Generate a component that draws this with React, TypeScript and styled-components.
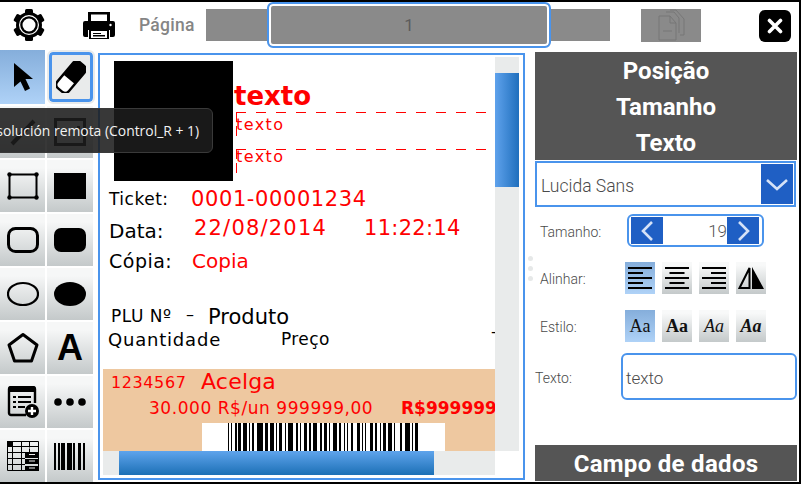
import React, { FC } from 'react';
import styled, { createGlobalStyle } from 'styled-components';

const GlobalStyle = createGlobalStyle`
	html, body {
		margin: 0;
		padding: 0;
		width: 801px;
		height: 484px;
		overflow: hidden;
		background: #fff;
	}
	* {
		box-sizing: border-box;
	}
`;

const Screen = styled.div`
	position: relative;
	width: 801px;
	height: 484px;
	overflow: hidden;
	background: #fff;
	border-top: 2px solid #000;
	border-bottom: 2px solid #000;
	border-right: 2px solid #000;
	font-family: Roboto, sans-serif;
	display: flex;
	flex-direction: column;
`;

/* top bar */
const Toolbar = styled.div`
	height: 46px;
	margin-bottom: 2px;
	flex: none;
	display: flex;
	align-items: center;
`;
const ToolIcon = styled.div<{ $left: number; $width: number }>`
	margin-left: ${(p) => p.$left}px;
	width: ${(p) => p.$width}px;
	height: 34px;
	display: flex;
	align-items: center;
	justify-content: center;
	flex: none;
`;
const PageLabel = styled.div`
	margin-left: 24px;
	width: 67px;
	font-size: 17.5px;
	font-weight: 500;
	color: #858585;
	letter-spacing: 0.25px;
`;
const PageBar = styled.div`
	width: 404px;
	height: 32px;
	background: #8a8a8a;
	display: flex;
	align-items: center;
	flex: none;
`;
const PageInput = styled.div`
	margin-left: 61px;
	width: 284px;
	height: 46px;
	flex: none;
	background: #8a8a8a;
	border: 2px solid #4a94ec;
	box-shadow: inset 0 0 0 2px #fff;
	border-radius: 6px;
	display: flex;
	align-items: center;
	justify-content: center;
	font-size: 17px;
	color: #5c5c5c;
`;
const PasteButton = styled.div`
	margin: 1px 0 0 31px;
	width: 60px;
	height: 33px;
	background: #8a8a8a;
	display: flex;
	align-items: center;
	justify-content: center;
	flex: none;
`;
const CloseButton = styled.div`
	margin: 2px 0 0 58px;
	width: 32px;
	height: 32px;
	background: #000;
	border-radius: 6px;
	display: flex;
	align-items: center;
	justify-content: center;
	flex: none;
`;

/* main area */
const Main = styled.div`
	flex: 1;
	display: flex;
	min-height: 0;
`;
const Palette = styled.div`
	width: 93px;
	flex: none;
	display: grid;
	grid-template-columns: 45px 46px;
	grid-template-rows: 54px;
	grid-auto-rows: 52px;
	column-gap: 2px;
	row-gap: 2px;
`;
const PaletteButton = styled.div<{ $active?: boolean; $focused?: boolean }>`
	display: flex;
	align-items: center;
	justify-content: center;
	background: ${(p) =>
		p.$active
			? 'linear-gradient(#85aedb, #afd2f7)'
			: p.$focused
				? '#e9ebeb'
				: 'linear-gradient(#f6f7f7 15%, #c4c9ca)'};
	${(p) =>
		p.$focused &&
		'margin: 2px 0 2px 2px; border: 3px solid #4a94ec; border-radius: 4px; outline: 2px solid #e9ebeb;'}
`;
const GlyphA = styled.span`
	font-family: 'Liberation Sans', sans-serif;
	font-weight: 700;
	font-size: 36px;
	line-height: 1;
	color: #000;
`;

/* document */
const DocPanel = styled.div`
	margin: 3px 0 0 5px;
	width: 427px;
	height: 427px;
	flex: none;
	border: 2px solid #4a94ec;
	padding: 2px 0 0 3px;
	display: grid;
	grid-template-columns: 392px 24px;
	grid-template-rows: 394px 24px;
`;
const Canvas = styled.div`
	position: relative;
	overflow: hidden;
	background: #fff;
	font-family: 'DejaVu Sans', sans-serif;
	color: #000;
`;
const VTrack = styled.div`
	background: #e9ebeb;
	padding-top: 16px;
`;
const VThumb = styled.div`
	height: 114px;
	background: linear-gradient(90deg, #5fa2ec, #1f6fbd);
`;
const HTrack = styled.div`
	background: #e9ebeb;
	padding-left: 16px;
`;
const HThumb = styled.div`
	width: 315px;
	height: 100%;
	background: linear-gradient(#5fa4ec, #1c70b6);
`;
const Logo = styled.div`
	position: absolute;
	left: 11px;
	top: 4px;
	width: 119px;
	height: 120px;
	background: #000;
`;
const Item = styled.div<{
	$x: number;
	$y: number;
	$size: number;
	$red?: boolean;
	$bold?: boolean;
	$track?: number;
}>`
	position: absolute;
	left: ${(p) => p.$x}px;
	top: ${(p) => p.$y}px;
	font-size: ${(p) => p.$size}px;
	line-height: 1;
	white-space: pre;
	color: ${(p) => (p.$red ? '#ff0000' : '#000')};
	font-weight: ${(p) => (p.$bold ? 700 : 400)};
	letter-spacing: ${(p) => p.$track ?? 0}px;
`;
const DashBox = styled.div<{ $y: number; $width: number }>`
	position: absolute;
	left: 133px;
	top: ${(p) => p.$y}px;
	width: ${(p) => p.$width}px;
	height: 24px;
	background:
		repeating-linear-gradient(90deg, #ff0000 0 10px, transparent 10px 20px) top left / 100% 1px no-repeat,
		repeating-linear-gradient(0deg, #ff0000 0 10px, transparent 10px 14px) top left / 1px 100% no-repeat;
`;
const ItemBand = styled.div`
	position: absolute;
	left: 0;
	top: 312px;
	width: 392px;
	height: 82px;
	background: #eec8a0;
`;
const BarcodeBox = styled.div`
	position: absolute;
	left: 99px;
	top: 366px;
	width: 243px;
	height: 28px;
	background: #fff;
	display: flex;
	justify-content: center;
`;

/* side panel */
const Side = styled.div`
	margin-left: 10px;
	width: 262px;
	flex: none;
	padding-top: 2px;
	display: flex;
	flex-direction: column;
`;
const SectionHead = styled.div`
	background: #555555;
	color: #fff;
	font-weight: 700;
	font-size: 24px;
	text-align: center;
`;
const HeadLine = styled.div`
	height: 36px;
	line-height: 38px;
`;
const Combo = styled.div`
	margin: 1px 1px 0 0;
	height: 46px;
	border: 2px solid #4a94ec;
	display: flex;
	align-items: center;
	justify-content: space-between;
	padding: 0 1px 0 4px;
	font-size: 17.5px;
	font-weight: 300;
	color: #4a4a4a;
`;
const ComboText = styled.span`
	padding-top: 3px;
`;
const ComboArrow = styled.div`
	width: 32px;
	height: 40px;
	background: #1f5fc4;
	display: flex;
	align-items: center;
	justify-content: center;
`;
const Row = styled.div<{ $top: number; $indent?: number }>`
	margin-top: ${(p) => p.$top}px;
	padding-left: ${(p) => p.$indent ?? 5}px;
	display: flex;
	align-items: center;
`;
const FieldLabel = styled.div<{ $width: number }>`
	width: ${(p) => p.$width}px;
	flex: none;
	padding-top: 2px;
	font-size: 14px;
	font-weight: 300;
	color: #4a4a4a;
`;
const Spinner = styled.div`
	width: 137px;
	height: 33px;
	border: 2px solid #4a94ec;
	border-radius: 6px;
	padding: 0 3px 0 2px;
	display: flex;
	align-items: center;
	font-size: 17px;
	font-weight: 300;
	color: #555;
`;
const SpinButton = styled.div`
	width: 32px;
	height: 27px;
	flex: none;
	background: #1f5fc4;
	display: flex;
	align-items: center;
	justify-content: center;
`;
const SpinValue = styled.div`
	flex: 1;
	text-align: right;
`;
const ToggleGroup = styled.div`
	display: flex;
	gap: 7px;
`;
const Toggle = styled.div<{ $on?: boolean }>`
	width: 30px;
	height: 32px;
	display: flex;
	align-items: center;
	justify-content: center;
	background: ${(p) =>
		p.$on
			? 'linear-gradient(#85aedb, #afd2f7)'
			: 'linear-gradient(#f8f9f9 10%, #c4c9ca)'};
`;
const StyleGlyph = styled.span<{ $bold?: boolean; $italic?: boolean }>`
	font-family: 'Liberation Serif', serif;
	font-size: 18px;
	color: #111;
	font-weight: ${(p) => (p.$bold ? 700 : 400)};
	font-style: ${(p) => (p.$italic ? 'italic' : 'normal')};
`;
const TextField = styled.div`
	width: 176px;
	height: 47px;
	border: 2px solid #4a94ec;
	border-radius: 6px;
	padding: 2px 0 0 3px;
	display: flex;
	align-items: center;
	font-size: 17px;
	font-weight: 300;
	color: #4a4a4a;
`;
const DataHead = styled.div`
	margin-top: auto;
	margin-bottom: 1px;
	height: 36px;
	line-height: 38px;
	background: #555555;
	color: #fff;
	font-weight: 700;
	font-size: 24px;
	letter-spacing: 0.3px;
	text-align: center;
`;
const Grip = styled.div`
	position: absolute;
	left: 528px;
	top: 254px;
	display: flex;
	flex-direction: column;
	gap: 5px;
`;
const GripDot = styled.div`
	width: 5px;
	height: 5px;
	border-radius: 50%;
	background: #e6e8e8;
`;
const Tooltip = styled.div`
	position: absolute;
	left: -60px;
	top: 106px;
	width: 273px;
	height: 45px;
	padding-right: 13px;
	border: 1px solid #3a3a3a;
	border-radius: 6px;
	background: rgba(28, 28, 28, 0.88);
	color: #f2f2f2;
	font-family: 'Open Sans', sans-serif;
	font-size: 13.9px;
	display: flex;
	align-items: center;
	justify-content: flex-end;
	white-space: pre;
`;

/* drawings */
const GearIcon = () => (
	<svg width="32" height="34" viewBox="0 0 32 34">
		<g fill="#000">
			{[0, 60, 120, 180, 240, 300].map((a) => (
				<rect key={a} x="12" y="1" width="8" height="8" rx="1.5" transform={`rotate(${a} 16 17)`} />
			))}
			<circle cx="16" cy="17" r="13" />
		</g>
		<circle cx="16" cy="17" r="9.4" fill="none" stroke="#fff" strokeWidth="1.2" />
		<circle cx="16" cy="17" r="6.5" fill="#fff" />
	</svg>
);
const PrinterIcon = () => (
	<svg width="32" height="27" viewBox="0 0 32 27">
		<path d="M5 0h22v10h-3V2.500H8V10H5z" fill="#000" />
		<path d="M2 9h28a2 2 0 0 1 2 2v12a2 2 0 0 1-2 2h-3v-7H5v7H2a2 2 0 0 1-2-2V11a2 2 0 0 1 2-2z" fill="#000" />
		<path d="M6 18h20v9H6z" fill="#000" />
		<path d="M8 19h16v7H8z" fill="#fff" />
		<path d="M10 21h8v1h-8zM10 23h12v1.500H10z" fill="#000" />
		<circle cx="27.500" cy="13" r="1.200" fill="#fff" />
	</svg>
);
const PasteIcon = () => (
	<svg width="30" height="33" viewBox="0 0 30 33" fill="none" stroke="#777" strokeWidth="1">
		<path d="M10 3h8l5 6v15" />
		<path d="M14 1h6l8 9v16h-4" />
		<path d="M3 7h11l6 7v17H3z" />
		<path d="M14 7v7h6M7 22h9" />
	</svg>
);
const CloseIcon = () => (
	<svg width="16" height="16" viewBox="0 0 16 16">
		<path d="M2.500 2.500l11 11M13.500 2.500l-11 11" stroke="#fff" strokeWidth="3.600" strokeLinecap="round" />
	</svg>
);
const ArrowIcon = () => (
	<svg width="22" height="32" viewBox="0 0 22 32">
		<path d="M3 2v24l6.500-5.500L14 30l5-2.500-4.500-9.500H22z" fill="#000" transform="translate(-1 0)" />
	</svg>
);
const EraserIcon = () => (
	<svg width="30" height="32" viewBox="0 0 30 32">
		<g transform="rotate(-50 15 16)">
			<rect x="-2" y="8.500" width="34" height="15" rx="5" fill="#fff" stroke="#000" strokeWidth="2.400" />
			<path d="M12 8.500h15a5 5 0 0 1 5 5v5a5 5 0 0 1-5 5H12z" fill="#000" />
		</g>
	</svg>
);
const PencilIcon = () => (
	<svg width="30" height="30" viewBox="0 0 30 30">
		<path d="M4 27L26 4" stroke="#000" strokeWidth="4" />
	</svg>
);
const ImageIcon = () => (
	<svg width="32" height="32" viewBox="0 0 32 32">
		<rect x="1.500" y="3.500" width="29" height="25" fill="none" stroke="#000" strokeWidth="3" />
		<path d="M23 10h3v3h-3z" fill="#000" />
	</svg>
);
const RectIcon = ({ filled }: { filled?: boolean }) =>
	filled ? (
		<svg width="32" height="28" viewBox="0 0 32 28">
			<rect x="0" y="1" width="32" height="26" fill="#000" />
		</svg>
	) : (
		<svg width="32" height="28" viewBox="0 0 32 28">
			<rect x="2.500" y="2.500" width="27" height="23" fill="none" stroke="#000" strokeWidth="2" />
			{[[2.5, 2.5], [29.5, 2.5], [2.5, 25.5], [29.5, 25.5]].map(([x, y]) => (
				<circle key={`${x}${y}`} cx={x} cy={y} r="2.200" fill="#000" />
			))}
		</svg>
	);
const RoundRectIcon = ({ filled }: { filled?: boolean }) => (
	<svg width="32" height="26" viewBox="0 0 32 26">
		<rect
			x={filled ? 0 : 1.5}
			y={filled ? 1 : 1.5}
			width={filled ? 32 : 29}
			height={filled ? 24 : 23}
			rx="7"
			fill={filled ? '#000' : 'none'}
			stroke="#000"
			strokeWidth={filled ? 0 : 3}
		/>
	</svg>
);
const EllipseIcon = ({ filled }: { filled?: boolean }) => (
	<svg width="32" height="26" viewBox="0 0 32 26">
		<ellipse
			cx="16"
			cy="13"
			rx={filled ? 16 : 15}
			ry={filled ? 12 : 11}
			fill={filled ? '#000' : 'none'}
			stroke="#000"
			strokeWidth={filled ? 0 : 2.2}
		/>
	</svg>
);
const PolygonIcon = () => (
	<svg width="32" height="32" viewBox="0 0 32 32">
		<path d="M16 2.500L30 13l-5.500 16h-17L2 13z" fill="none" stroke="#000" strokeWidth="3" strokeLinejoin="round" />
	</svg>
);
const FormIcon = () => (
	<svg width="32" height="32" viewBox="0 0 32 32">
		<path d="M19 29H4a2 2 0 0 1-2-2V3a2 2 0 0 1 2-2h22a2 2 0 0 1 2 2v14" fill="none" stroke="#000" strokeWidth="2.400" />
		<path d="M2 1h26v5H2z" fill="#000" />
		<path d="M6 10h3v2H6zM11 10h13v2H11zM6 15h3v2H6zM11 15h13v2H11zM6 20h3v2H6zM11 20h7v2h-7z" fill="#000" />
		<circle cx="25" cy="25" r="7" fill="#000" />
		<path d="M25 21v8M21 25h8" stroke="#fff" strokeWidth="2.400" />
	</svg>
);
const DotsIcon = () => (
	<svg width="32" height="10" viewBox="0 0 32 10">
		<circle cx="4" cy="5" r="3.800" fill="#000" />
		<circle cx="16" cy="5" r="3.800" fill="#000" />
		<circle cx="28" cy="5" r="3.800" fill="#000" />
	</svg>
);
const TableIcon = () => (
	<svg width="32" height="30" viewBox="0 0 32 30">
		<path d="M0.500 0.500h31v29h-31z" fill="none" stroke="#000" />
		<path d="M0 0h5v5H0zM18 11h14v6H18zM18 18h14v5H18zM18 25h14v5H18z" fill="#000" />
		<path d="M0 5.500h32M0 11.500h18M0 17.500h18M0 23.500h18M5.500 0v30M14.500 0v30M22.500 0v11" stroke="#000" fill="none" />
		<path d="M20 7h9M22 13.500h6M22 20h6M22 27h6" stroke="#eee" />
	</svg>
);
const BARS = [2, 2, 2, 1, 4, 2, 5, 1, 2, 3, 3, 2, 2, 2, 3, 3];
const BarcodeIcon = () => {
	let x = 0;
	return (
		<svg width="32" height="27" viewBox="0 0 32 27">
			{BARS.map((w, i) => {
				const at = x;
				x += w;
				return i % 2 === 0 ? <rect key={i} x={at} y="0" width={w} height="27" fill="#000" /> : null;
			})}
		</svg>
	);
};
const TicketBarcode = () => {
	const widths = [
		1, 2, 1, 3, 2, 1, 3, 2, 4, 2, 1, 2, 2, 3, 6, 2, 3, 2, 4, 2, 1, 2, 3, 3, 1, 2, 5, 3, 2, 2, 1, 3, 3, 2, 2, 2, 4, 3,
		2, 2, 3, 2, 1, 3, 4, 2, 2, 3, 1, 2, 1, 3, 2, 4, 3, 2, 1, 2, 1, 4, 3, 2, 2, 3, 1, 2, 3, 2, 4, 2, 1, 5, 2, 3, 5, 2,
		1, 2, 3, 3, 2, 4, 2, 2, 1, 2,
	];
	let x = 0;
	return (
		<svg width="192" height="28" viewBox="0 0 192 28">
			{widths.map((w, i) => {
				const at = x;
				x += w;
				return i % 2 === 0 ? <rect key={i} x={at} y="0" width={w} height="28" fill="#000" /> : null;
			})}
		</svg>
	);
};
const Chevron = ({ dir }: { dir: 'left' | 'right' | 'down' }) => {
	const d = { left: 'M14 3L5 12l9 9', right: 'M5 3l9 9-9 9', down: 'M2 6l10 9 10-9' }[dir];
	return (
		<svg width={dir === 'down' ? 24 : 18} height="24" viewBox={dir === 'down' ? '0 0 24 20' : '0 0 18 24'}>
			<path d={d} fill="none" stroke="#d5e2f7" strokeWidth="2.600" />
		</svg>
	);
};
const AlignIcon = ({ mode }: { mode: 'left' | 'center' | 'right' }) => {
	const rows = [24, 15, 24, 15, 24];
	return (
		<svg width="24" height="24" viewBox="0 0 24 24">
			{rows.map((w, i) => (
				<rect
					key={i}
					x={mode === 'left' ? 0 : mode === 'right' ? 24 - w : (24 - w) / 2}
					y={1 + i * 5}
					width={w}
					height="2"
					fill="#000"
				/>
			))}
		</svg>
	);
};
const FlipIcon = () => (
	<svg width="26" height="24" viewBox="0 0 26 24">
		<path d="M11.500 2v20H1.500z" fill="none" stroke="#000" strokeWidth="2" />
		<path d="M14 1v22h12z" fill="#000" />
	</svg>
);

const App: FC = () => (
	<Screen>
		<GlobalStyle />
		<Toolbar>
			<ToolIcon $left={13} $width={32}>
				<GearIcon />
			</ToolIcon>
			<ToolIcon $left={38} $width={32}>
				<PrinterIcon />
			</ToolIcon>
			<PageLabel>Página</PageLabel>
			<PageBar>
				<PageInput>1</PageInput>
			</PageBar>
			<PasteButton>
				<PasteIcon />
			</PasteButton>
			<CloseButton>
				<CloseIcon />
			</CloseButton>
		</Toolbar>
		<Main>
			<Palette>
				<PaletteButton $active>
					<ArrowIcon />
				</PaletteButton>
				<PaletteButton $focused>
					<EraserIcon />
				</PaletteButton>
				<PaletteButton>
					<PencilIcon />
				</PaletteButton>
				<PaletteButton>
					<ImageIcon />
				</PaletteButton>
				<PaletteButton>
					<RectIcon />
				</PaletteButton>
				<PaletteButton>
					<RectIcon filled />
				</PaletteButton>
				<PaletteButton>
					<RoundRectIcon />
				</PaletteButton>
				<PaletteButton>
					<RoundRectIcon filled />
				</PaletteButton>
				<PaletteButton>
					<EllipseIcon />
				</PaletteButton>
				<PaletteButton>
					<EllipseIcon filled />
				</PaletteButton>
				<PaletteButton>
					<PolygonIcon />
				</PaletteButton>
				<PaletteButton>
					<GlyphA>A</GlyphA>
				</PaletteButton>
				<PaletteButton>
					<FormIcon />
				</PaletteButton>
				<PaletteButton>
					<DotsIcon />
				</PaletteButton>
				<PaletteButton>
					<TableIcon />
				</PaletteButton>
				<PaletteButton>
					<BarcodeIcon />
				</PaletteButton>
			</Palette>
			<DocPanel>
				<Canvas>
					<Logo />
					<Item $x={131} $y={26} $size={26} $red $bold>
						texto
					</Item>
					<DashBox $y={55} $width={254} />
					<DashBox $y={92} $width={262} />
					<Item $x={133} $y={60} $size={16} $red $track={1.4}>
						texto
					</Item>
					<Item $x={133} $y={92} $size={16} $red $track={1.4}>
						texto
					</Item>
					<Item $x={6} $y={134} $size={17} $track={0.5}>
						Ticket:
					</Item>
					<Item $x={88} $y={132} $size={21} $red $track={0.6}>
						0001-00001234
					</Item>
					<Item $x={6} $y={164} $size={20}>
						Data:
					</Item>
					<Item $x={91} $y={161} $size={21} $red $track={1.2}>
						22/08/2014
					</Item>
					<Item $x={261} $y={161} $size={21} $red $track={0.3}>
						11:22:14
					</Item>
					<Item $x={6} $y={195} $size={19} $track={0.5}>
						Cópia:
					</Item>
					<Item $x={89} $y={194} $size={20} $red>
						Copia
					</Item>
					<Item $x={8} $y={251} $size={17} $track={0.5}>
						PLU Nº
					</Item>
					<Item $x={83} $y={250} $size={16}>
						–
					</Item>
					<Item $x={105} $y={250} $size={21}>
						Produto
					</Item>
					<Item $x={5} $y={274} $size={18} $track={0.8}>
						Quantidade
					</Item>
					<Item $x={178} $y={274} $size={17} $track={0.4}>
						Preço
					</Item>
					<Item $x={388} $y={267} $size={16}>
						-
					</Item>
					<ItemBand />
					<Item $x={8} $y={318} $size={16} $red $track={0.6}>
						1234567
					</Item>
					<Item $x={98} $y={314} $size={22} $red $bold={false} $track={0.2}>
						Acelga
					</Item>
					<Item $x={46} $y={343} $size={17} $red $track={0.55}>
						30.000 R$/un 999999,00
					</Item>
					<Item $x={298} $y={343} $size={17} $red $bold>
						R$999999
					</Item>
					<BarcodeBox>
						<TicketBarcode />
					</BarcodeBox>
				</Canvas>
				<VTrack>
					<VThumb />
				</VTrack>
				<HTrack>
					<HThumb />
				</HTrack>
			</DocPanel>
			<Side>
				<SectionHead>
					<HeadLine>Posição</HeadLine>
					<HeadLine>Tamanho</HeadLine>
					<HeadLine>Texto</HeadLine>
				</SectionHead>
				<Combo>
					<ComboText>Lucida Sans</ComboText>
					<ComboArrow>
						<Chevron dir="down" />
					</ComboArrow>
				</Combo>
				<Row $top={7}>
					<FieldLabel $width={87}>Tamanho:</FieldLabel>
					<Spinner>
						<SpinButton>
							<Chevron dir="left" />
						</SpinButton>
						<SpinValue>19</SpinValue>
						<SpinButton>
							<Chevron dir="right" />
						</SpinButton>
					</Spinner>
				</Row>
				<Row $top={15}>
					<FieldLabel $width={85}>Alinhar:</FieldLabel>
					<ToggleGroup>
						<Toggle $on>
							<AlignIcon mode="left" />
						</Toggle>
						<Toggle>
							<AlignIcon mode="center" />
						</Toggle>
						<Toggle>
							<AlignIcon mode="right" />
						</Toggle>
						<Toggle>
							<FlipIcon />
						</Toggle>
					</ToggleGroup>
				</Row>
				<Row $top={16}>
					<FieldLabel $width={85}>Estilo:</FieldLabel>
					<ToggleGroup>
						<Toggle $on>
							<StyleGlyph>Aa</StyleGlyph>
						</Toggle>
						<Toggle>
							<StyleGlyph $bold>Aa</StyleGlyph>
						</Toggle>
						<Toggle>
							<StyleGlyph $italic>Aa</StyleGlyph>
						</Toggle>
						<Toggle>
							<StyleGlyph $bold $italic>
								Aa
							</StyleGlyph>
						</Toggle>
					</ToggleGroup>
				</Row>
				<Row $top={11} $indent={0}>
					<FieldLabel $width={86}>Texto:</FieldLabel>
					<TextField>texto</TextField>
				</Row>
				<DataHead>Campo de dados</DataHead>
			</Side>
		</Main>
		<Grip>
			<GripDot />
			<GripDot />
			<GripDot />
		</Grip>
		<Tooltip>Resolución remota (Control_R + 1)</Tooltip>
	</Screen>
);

export default App;
